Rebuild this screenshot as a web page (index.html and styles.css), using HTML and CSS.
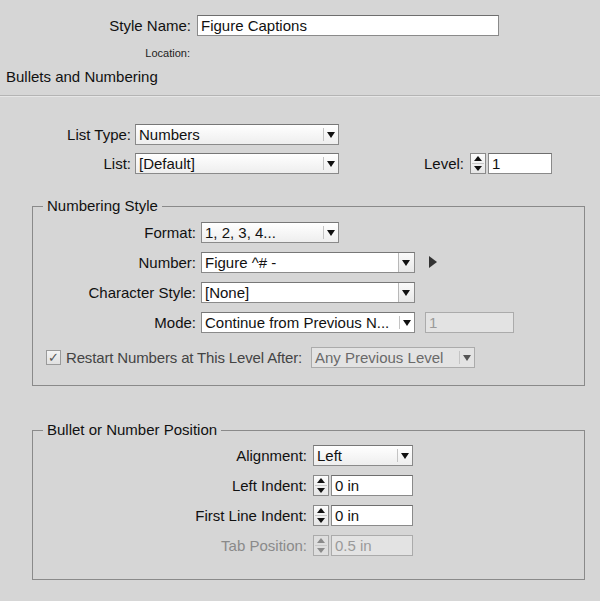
FILE: index.html
```html
<!DOCTYPE html>
<html lang="en">
<head>
    <meta charset="UTF-8">
    <title>Paragraph Style Options</title>
    <link rel="stylesheet" href="styles.css">
</head>
<body>
    <div class="dialog">

        <!-- Style name -->
        <div class="row">
            <span class="lbl name-lbl">Style Name:</span>
            <div class="field name-field">Figure Captions</div>
        </div>
        <div class="location">Location:</div>

        <div class="section-title">Bullets and Numbering</div>
        <div class="divider"></div>

        <!-- List type / list / level -->
        <div class="list-rows">
            <div class="row">
                <span class="lbl list-lbl">List Type:</span>
                <div class="select w-list"><span class="value">Numbers</span><span class="arrow"></span></div>
            </div>
            <div class="row">
                <span class="lbl list-lbl">List:</span>
                <div class="select w-list"><span class="value">[Default]</span><span class="arrow"></span></div>
                <span class="lbl level-lbl">Level:</span>
                <div class="spinner"><span class="up"></span><span class="down"></span></div>
                <div class="field level-field">1</div>
            </div>
        </div>

        <!-- Numbering Style -->
        <fieldset class="group numbering">
            <legend>Numbering Style</legend>
            <div class="rows">
                <div class="row">
                    <span class="lbl num-lbl">Format:</span>
                    <div class="select w-format"><span class="value">1, 2, 3, 4...</span><span class="arrow"></span></div>
                </div>
                <div class="row">
                    <span class="lbl num-lbl">Number:</span>
                    <div class="select combo w-wide"><span class="value">Figure ^# -</span><span class="arrow"></span></div>
                    <span class="flyout"></span>
                </div>
                <div class="row">
                    <span class="lbl num-lbl">Character Style:</span>
                    <div class="select combo w-wide"><span class="value">[None]</span><span class="arrow"></span></div>
                </div>
                <div class="row">
                    <span class="lbl num-lbl">Mode:</span>
                    <div class="select w-wide mode"><span class="value">Continue from Previous N...</span><span class="arrow"></span></div>
                    <div class="field disabled mode-field">1</div>
                </div>
                <div class="row check-row">
                    <div class="check-wrap">
                        <span class="checkbox">&#10003;</span>
                        <span class="check-text">Restart Numbers at This Level After:</span>
                    </div>
                    <div class="select disabled w-after"><span class="value">Any Previous Level</span><span class="arrow"></span></div>
                </div>
            </div>
        </fieldset>

        <!-- Bullet or Number Position -->
        <fieldset class="group position">
            <legend>Bullet or Number Position</legend>
            <div class="rows">
                <div class="row">
                    <span class="lbl pos-lbl">Alignment:</span>
                    <div class="select w-align"><span class="value">Left</span><span class="arrow"></span></div>
                </div>
                <div class="row">
                    <span class="lbl pos-lbl">Left Indent:</span>
                    <div class="spinner"><span class="up"></span><span class="down"></span></div>
                    <div class="field indent-field">0 in</div>
                </div>
                <div class="row">
                    <span class="lbl pos-lbl">First Line Indent:</span>
                    <div class="spinner"><span class="up"></span><span class="down"></span></div>
                    <div class="field indent-field">0 in</div>
                </div>
                <div class="row is-disabled">
                    <span class="lbl pos-lbl">Tab Position:</span>
                    <div class="spinner disabled"><span class="up"></span><span class="down"></span></div>
                    <div class="field disabled indent-field">0.5 in</div>
                </div>
            </div>
        </fieldset>

    </div>
</body>
</html>
```

FILE: styles.css
```css
/* Global */
html, body {
    margin: 0;
    padding: 0;
    background: #d6d6d6;
}

body {
    font-family: 'Liberation Sans', Arial, sans-serif;
    font-size: 15px;
    color: #111;
    width: 600px;
    height: 601px;
    overflow: hidden;
}

.dialog {
    padding-top: 15px;
}

.row {
    display: flex;
    align-items: center;
    height: 21px;
}

.lbl {
    text-align: right;
    white-space: nowrap;
}

/* Style name block */
.name-lbl {
    width: 191px;
    margin-right: 6px;
}

.name-field {
    width: 302px;
}

.location {
    width: 190px;
    margin-top: 11px;
    text-align: right;
    font-size: 11px;
    line-height: 12px;
    color: #222;
}

.section-title {
    margin-top: 10px;
    padding-left: 6px;
    line-height: 16px;
}

.divider {
    margin-top: 10px;
    height: 0;
    border-top: 1px solid #b4b4b4;
    border-bottom: 1px solid #e6e6e6;
}

/* Fields */
.field {
    box-sizing: border-box;
    height: 21px;
    line-height: 19px;
    padding-left: 3px;
    background: #fff;
    border: 1px solid #8a8a8a;
    border-top-color: #6e6e6e;
    white-space: nowrap;
    overflow: hidden;
}

.field.disabled {
    background: #e3e3e3;
    border-color: #ababab;
    color: #9a9a9a;
}

/* Dropdowns */
.select {
    box-sizing: border-box;
    height: 21px;
    display: flex;
    align-items: stretch;
    border: 1px solid #8a8a8a;
    border-top-color: #777;
    background: linear-gradient(#ffffff, #eeeeee);
}

.select .value {
    flex: 1;
    padding-left: 3px;
    line-height: 19px;
    white-space: nowrap;
    overflow: hidden;
}

.select .arrow {
    width: 15px;
    position: relative;
    flex: none;
}

.select .arrow::before {
    content: "";
    position: absolute;
    left: 0;
    top: 3px;
    bottom: 3px;
    border-left: 1px solid #c4c4c4;
}

.select .arrow::after {
    content: "";
    position: absolute;
    left: 4px;
    top: 7px;
    border-left: 4px solid transparent;
    border-right: 4px solid transparent;
    border-top: 6px solid #111;
}

.select.combo {
    background: #fff;
}

.select.combo .arrow {
    background: linear-gradient(#fafafa, #e8e8e8);
    border-left: 1px solid #b8b8b8;
}

.select.combo .arrow::before {
    display: none;
}

.select.combo .arrow::after {
    left: 3px;
}

.select.mode {
    background: #fff;
}

.select.disabled {
    background: #e3e3e3;
    border-color: #ababab;
    color: #6a6a6a;
}

.select.disabled .arrow::after {
    border-top-color: #555;
}

/* Spinners */
.spinner {
    box-sizing: border-box;
    width: 16px;
    height: 21px;
    margin-right: 2px;
    border: 1px solid #8a8a8a;
    background: linear-gradient(#fcfcfc, #e6e6e6);
    display: flex;
    flex-direction: column;
    position: relative;
}

.spinner::after {
    content: "";
    position: absolute;
    left: 1px;
    right: 1px;
    top: 9px;
    border-top: 1px solid #c8c8c8;
}

.spinner span {
    flex: 1;
    position: relative;
}

.spinner .up::after,
.spinner .down::after {
    content: "";
    position: absolute;
    left: 3px;
    border-left: 4px solid transparent;
    border-right: 4px solid transparent;
}

.spinner .up::after {
    top: 2px;
    border-bottom: 5px solid #111;
}

.spinner .down::after {
    top: 2px;
    border-top: 5px solid #111;
}

.spinner.disabled {
    border-color: #ababab;
    background: #dedede;
}

.spinner.disabled .up::after {
    border-bottom-color: #8a8a8a;
}

.spinner.disabled .down::after {
    border-top-color: #8a8a8a;
}

/* List rows */
.list-rows {
    margin-top: 27px;
    display: flex;
    flex-direction: column;
    gap: 8px;
}

.list-lbl {
    width: 131px;
    margin-right: 4px;
}

.w-list { width: 204px; }

.level-lbl {
    width: 42px;
    margin-left: 83px;
    margin-right: 6px;
}

.level-field { width: 64px; }

/* Groups */
.group {
    box-sizing: border-box;
    width: 553px;
    margin: 0 0 0 32px;
    padding: 0;
    border: 1px solid #8a8a8a;
    min-width: 0;
}

.group legend {
    margin-left: 10px;
    padding: 0 4px;
    line-height: 16px;
}

.group .rows {
    display: flex;
    flex-direction: column;
    gap: 9px;
}

.numbering {
    margin-top: 24px;
}

.numbering .rows {
    padding: 8px 0 17px;
}

.position {
    margin-top: 36px;
}

.position .rows {
    padding: 7px 0 23px;
}

.num-lbl {
    width: 163px;
    margin-right: 5px;
}

.w-format { width: 138px; }
.w-wide { width: 214px; }

.flyout {
    margin-left: 14px;
    width: 0;
    height: 0;
    border-top: 6px solid transparent;
    border-bottom: 6px solid transparent;
    border-left: 8px solid #333;
    margin-top: -2px;
}

.mode-field {
    width: 89px;
    margin-left: 10px;
}

.check-row {
    margin-top: 5px;
}

.check-wrap {
    width: 278px;
    box-sizing: border-box;
    padding-left: 13px;
    display: flex;
    align-items: center;
}

.checkbox {
    box-sizing: border-box;
    width: 15px;
    height: 15px;
    border: 1px solid #9a9a9a;
    background: linear-gradient(#f4f4f4, #e0e0e0);
    color: #555;
    font-size: 13px;
    line-height: 13px;
    text-align: center;
    margin-right: 5px;
    font-family: 'DejaVu Sans', sans-serif;
}

.check-text {
    color: #444;
    white-space: nowrap;
    letter-spacing: -0.15px;
}

.w-after { width: 164px; }

.pos-lbl {
    width: 274px;
    margin-right: 6px;
}

.w-align { width: 100px; }

.indent-field { width: 82px; }

.is-disabled .lbl {
    color: #8a8a8a;
}
```
